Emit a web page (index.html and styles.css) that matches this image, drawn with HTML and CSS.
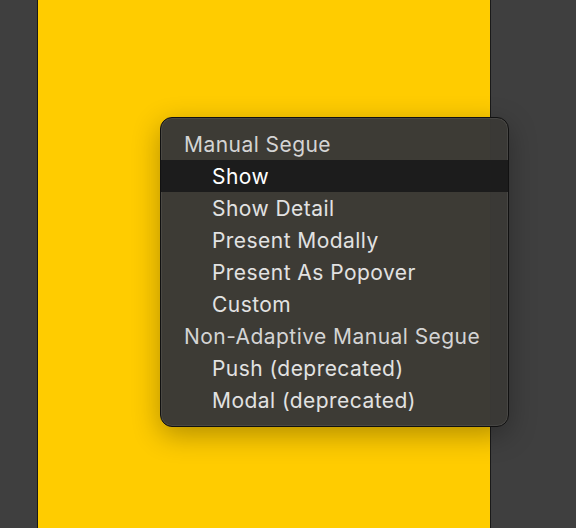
FILE: index.html
```html
<!DOCTYPE html>
<html>
<head>
<meta charset="utf-8">
<link rel="stylesheet" href="styles.css">
</head>
<body>
<div class="canvas">
  <div class="gutter"></div>
  <div class="view"></div>
  <div class="gutter"></div>
</div>
<div class="menu">
  <div class="row header">Manual Segue</div>
  <div class="row item selected">Show</div>
  <div class="row item">Show Detail</div>
  <div class="row item">Present Modally</div>
  <div class="row item">Present As Popover</div>
  <div class="row item">Custom</div>
  <div class="row header">Non-Adaptive Manual Segue</div>
  <div class="row item">Push (deprecated)</div>
  <div class="row item">Modal (deprecated)</div>
</div>
</body>
</html>
```
FILE: styles.css
```css
html, body {
  margin: 0;
  padding: 0;
  height: 100%;
}
body {
  background: #3f3f3f;
  font-family: Inter, "Noto Sans", sans-serif;
  overflow: hidden;
}
.canvas {
  display: flex;
  height: 528px;
}
.gutter {
  flex: 1;
  background: #3f3f3f;
}
.canvas .gutter:first-child {
  flex: 0 0 37px;
}
.view {
  flex: 0 0 452px;
  background: #ffcc00;
  border-left: 1px solid #1a1a1a;
  border-right: 1px solid #1a1a1a;
}
.menu {
  position: absolute;
  left: 160px;
  top: 117px;
  width: 347px;
  padding: 10px 0 10px;
  background: rgba(58, 57, 54, 0.985);
  border: 1px solid #111;
  border-radius: 12px;
  box-shadow: inset 0 0 0 1px rgba(255,255,255,0.07), 0 8px 28px rgba(0,0,0,0.3);
}
.row {
  box-sizing: border-box;
  height: 32px;
  padding-top: 2px;
  line-height: 30px;
  font-size: 21px;
  letter-spacing: 0.45px;
  white-space: nowrap;
}
.header {
  padding-left: 23px;
  color: #d4d4d4;
}
.item {
  padding-left: 51px;
  color: #e2e2e2;
}
.selected {
  background: #1c1c1c;
  color: #ffffff;
}
```
